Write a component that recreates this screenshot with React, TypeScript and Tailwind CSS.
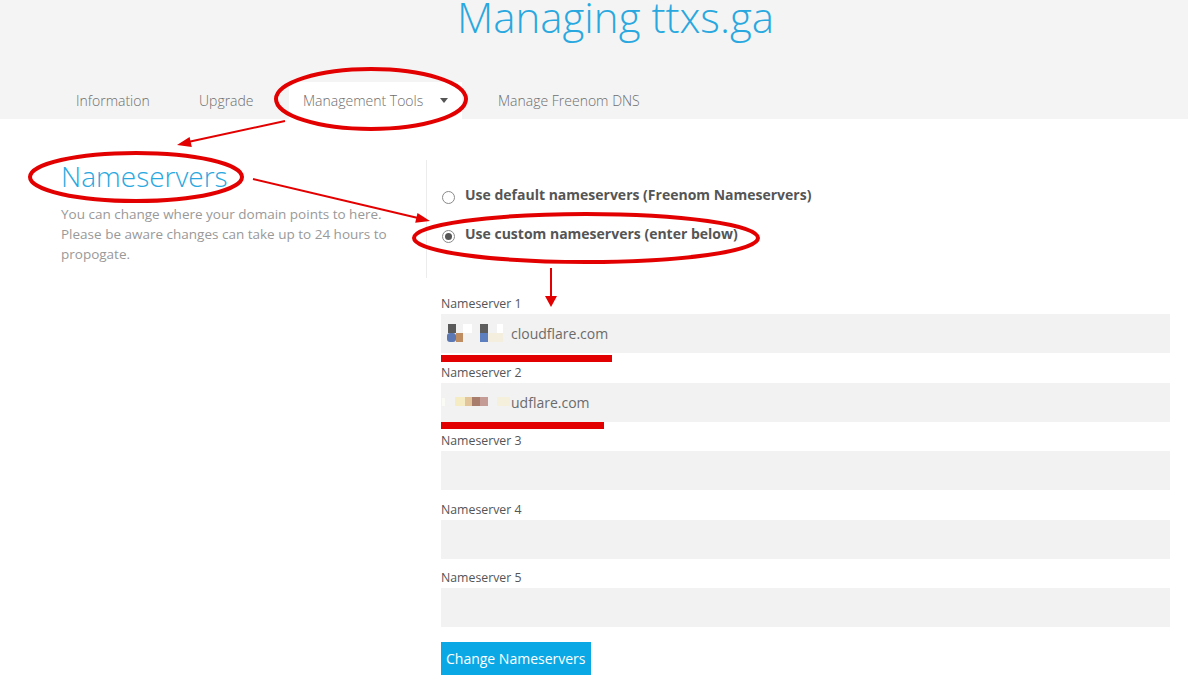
import React from "react";

const font = { fontFamily: '"Open Sans", "Noto Sans", Arial, sans-serif' };

function Blob1() {
  return (
    <svg width="64" height="20" viewBox="0 0 64 20" className="shrink-0">
      <rect x="1" y="0" width="8" height="9" fill="#5a5a5a" />
      <rect x="0" y="9" width="9" height="9" rx="3" fill="#5b78b4" />
      <rect x="9" y="9" width="7" height="9" fill="#bf8d62" />
      <rect x="16" y="0" width="9" height="9" fill="#ffffff" />
      <rect x="33" y="0" width="8" height="9" fill="#5d5d5d" />
      <rect x="33" y="9" width="8" height="9" fill="#5d7fbf" />
      <rect x="41" y="9" width="15" height="9" fill="#f3eedd" />
      <rect x="50" y="0" width="6" height="9" fill="#ffffff" />
    </svg>
  );
}

function Blob2() {
  return (
    <svg width="70" height="20" viewBox="0 0 70 20" className="shrink-0">
      <rect x="1" y="6" width="3" height="8" fill="#fbfbf6" />
      <rect x="14" y="5" width="10" height="9" fill="#f6ecc4" />
      <rect x="24" y="5" width="7" height="9" fill="#e2c59a" />
      <rect x="31" y="5" width="8" height="9" fill="#a87d6c" />
      <rect x="39" y="5" width="8" height="9" fill="#c49c95" />
      <rect x="56" y="5" width="13" height="9" fill="#f5f0dc" />
    </svg>
  );
}

function Field({ n, children }: { n: number; children?: React.ReactNode }) {
  return (
    <div className="mb-[11.5px]">
      <div className="text-[12.3px] leading-[16px] text-[#555] mb-[2px]">Nameserver {n}</div>
      <div className="h-[39px] bg-[#f2f2f2] flex items-center text-[14px] text-[#6b6b6b]">
        {children}
      </div>
    </div>
  );
}

function Radio({ checked }: { checked?: boolean }) {
  return (
    <span className="w-[13px] h-[13px] rounded-full border border-[#8a8a8a] bg-white flex items-center justify-center shrink-0">
      {checked && <span className="w-[7px] h-[7px] rounded-full bg-[#555]" />}
    </span>
  );
}

export default function App() {
  const red = "#e30000";
  return (
    <div className="relative w-[1188px] h-[691px] overflow-hidden bg-white" style={font}>
      {/* Header */}
      <div className="h-[119px] bg-[#f4f4f4] flex flex-col">
        <div className="flex justify-center pl-[43px]">
          <h1 className="text-[42px] leading-[34px] font-light text-[#29a8df] whitespace-nowrap">
            Managing ttxs.ga
          </h1>
        </div>
        <div className="mt-auto flex pl-[62px] gap-[22px] text-[14px] font-light text-[#6e6e6e] whitespace-nowrap">
          <div className="w-[101px] h-[37px] px-[14px] pb-[1px] flex items-center">Information</div>
          <div className="w-[82px] h-[37px] px-[14px] pb-[1px] flex items-center">Upgrade</div>
          <div className="w-[173px] h-[37px] px-[14px] pb-[1px] flex items-center bg-white">
            <span>Management Tools</span>
            <svg width="8" height="5" viewBox="0 0 8 5" className="ml-[17px] shrink-0">
              <polygon points="0,0 8,0 4,5" fill="#555" />
            </svg>
          </div>
          <div className="h-[37px] px-[14px] pb-[1px] flex items-center">Manage Freenom DNS</div>
        </div>
      </div>

      {/* Body */}
      <div className="flex pt-[41px] pl-[61px] pr-[18px]">
        <div className="w-[365px] shrink-0 pr-[20px]">
          <h2 className="text-[28px] leading-[30px] font-light text-[#29a8df] mt-[1px]">Nameservers</h2>
          <p className="text-[13.5px] leading-[20px] font-normal text-[#999] mt-[13px]">
            You can change where your domain points to here. Please be aware changes can take up to 24 hours to propogate.
          </p>
        </div>
        <div className="flex-1 flex flex-col">
          <div className="border-l border-[#ececec] h-[118px] pl-[15px] pt-[26px] text-[14px] font-bold text-[#555]">
            <div className="flex items-center gap-[10px] h-[16px]">
              <span className="mt-[7px]"><Radio /></span>
              <span>Use default nameservers (Freenom Nameservers)</span>
            </div>
            <div className="flex items-center gap-[10px] h-[16px] mt-[23px]">
              <span className="mt-[7px]"><Radio checked /></span>
              <span>Use custom nameservers (enter below)</span>
            </div>
          </div>
          <div className="pl-[15px] pt-[18px]">
            <Field n={1}>
              <span className="pl-[6px] flex items-center">
                <Blob1 />
              </span>
              <span>cloudflare.com</span>
            </Field>
            <Field n={2}>
              <Blob2 />
              <span>udflare.com</span>
            </Field>
            <Field n={3} />
            <Field n={4} />
            <Field n={5} />
            <button className="mt-[3.5px] h-[33px] px-[5px] bg-[#0aa9e6] text-white text-[14px] leading-[33px]" style={font}>
              Change Nameservers
            </button>
          </div>
        </div>
      </div>

      {/* Annotation overlay */}
      <svg className="absolute inset-0 pointer-events-none" width="1188" height="691" viewBox="0 0 1188 691">
        <ellipse cx="371" cy="99" rx="95" ry="30" fill="none" stroke={red} strokeWidth="4" />
        <ellipse cx="136" cy="177" rx="106" ry="24" fill="none" stroke={red} strokeWidth="4" />
        <ellipse cx="586" cy="238" rx="172" ry="24" fill="none" stroke={red} strokeWidth="4" />
        <line x1="285" y1="121" x2="188" y2="142" stroke={red} strokeWidth="2" />
        <polygon points="177,145 191.8,146.9 189.6,137.1" fill={red} />
        <line x1="253" y1="179" x2="418" y2="218" stroke={red} strokeWidth="2" />
        <polygon points="430,221 415.2,222.7 417.5,212.9" fill={red} />
        <line x1="551" y1="268" x2="551" y2="298" stroke={red} strokeWidth="2" />
        <polygon points="551,307 545,296 557,296" fill={red} />
        <rect x="441" y="355" width="171" height="7" fill={red} />
        <rect x="441" y="422" width="163" height="7" fill={red} />
      </svg>
    </div>
  );
}
